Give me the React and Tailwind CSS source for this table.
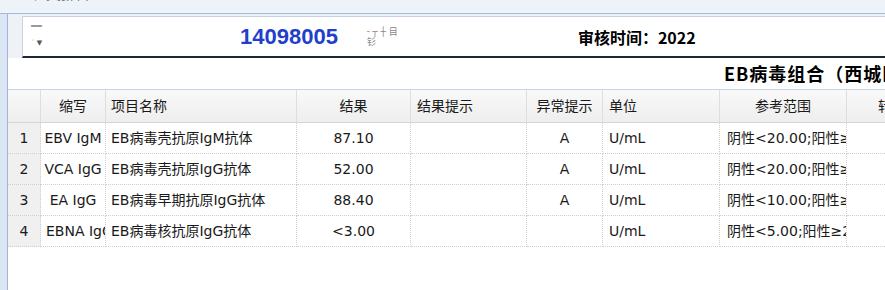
import React from 'react';

const COLS = 'grid grid-cols-[33px_65px_191px_114px_116px_76px_117px_127px_120px]';

const headers = [
  { label: '', cls: 'justify-center' },
  { label: '缩写', cls: 'justify-center' },
  { label: '项目名称', cls: 'justify-start pl-[5px]' },
  { label: '结果', cls: 'justify-center' },
  { label: '结果提示', cls: 'justify-start pl-[6px]' },
  { label: '异常提示', cls: 'justify-center' },
  { label: '单位', cls: 'justify-start pl-[6px]' },
  { label: '参考范围', cls: 'justify-center' },
  { label: '转换结果', cls: 'justify-start pl-[31px]' },
];

const rows = [
  ['1', 'EBV IgM', 'EB病毒壳抗原IgM抗体', '87.10', '', 'A', 'U/mL', '阴性<20.00;阳性≥20.00', ''],
  ['2', 'VCA IgG', 'EB病毒壳抗原IgG抗体', '52.00', '', 'A', 'U/mL', '阴性<20.00;阳性≥20.00', ''],
  ['3', 'EA IgG', 'EB病毒早期抗原IgG抗体', '88.40', '', 'A', 'U/mL', '阴性<10.00;阳性≥10.00', ''],
  ['4', 'EBNA IgG', 'EB病毒核抗原IgG抗体', '<3.00', '', '', 'U/mL', '阴性<5.00;阳性≥20.00', ''],
];

const cellAlign = [
  'justify-center',
  'justify-center',
  'justify-start pl-[5px]',
  'justify-center',
  'justify-start pl-[6px]',
  'justify-center',
  'justify-start pl-[6px]',
  'justify-start pl-[7px]',
  'justify-start pl-[6px]',
];

export default function App() {
  return (
    <div className="w-[885px] h-[290px] overflow-hidden bg-white flex flex-col font-['DejaVu_Sans','Noto_Sans_CJK_SC',sans-serif] text-[#1a1a1a]">
      {/* title strip, cut off at top */}
      <div className="h-[14px] shrink-0 bg-[#eef3fa] border-b border-[#a3badc] overflow-hidden">
        <div className="pl-[33px] mt-[-11px] text-[12px] leading-[14px] text-[#5a6478] whitespace-nowrap">检验报告单</div>
      </div>

      <div className="flex flex-1 min-h-0">
        <div className="w-[8px] shrink-0 bg-[#dbe5f3] border-r border-[#9fb5d8]" />

        <div className="flex-1 min-w-0 flex flex-col">
          {/* patient header */}
          <div className="h-[44px] shrink-0 flex bg-[#eef1f5]">
            <div className="w-[14px] shrink-0" />
            <div className="flex-1 mt-[2px] bg-white border-t border-l border-[#c9d2de] border-b-2 border-b-[#1f2636] flex items-center whitespace-nowrap">
              <div className="w-[217px] shrink-0 flex flex-col gap-[6px] pl-[8px] text-[7px] leading-[7px] text-[#555]">
                <span>▔▔</span>
                <span>˙ ▼</span>
              </div>
              <span className="font-['Liberation_Sans',sans-serif] font-bold text-[22px] text-[#1f3fcc]">14098005</span>
              <span className="ml-[29px] text-[9px] leading-[10px] text-[#888] flex flex-col">
                <span>╴┬ ┼ 目</span>
                <span>钐</span>
              </span>
              <span className="ml-[180px] font-['Noto_Sans_CJK_SC',sans-serif] font-bold text-[16px] text-black">审核时间：2022</span>
            </div>
          </div>

          {/* report title */}
          <div className="h-[31px] shrink-0 flex items-center pl-[716px] whitespace-nowrap">
            <span className="font-['Noto_Sans_CJK_SC',serif] font-bold text-[18px] text-black tracking-[1px]">EB病毒组合（西城区）</span>
          </div>

          {/* result grid */}
          <div className="border-t border-[#c5d3e8] flex-1">
            <div className={`${COLS} h-[33px] bg-gradient-to-b from-[#f9f9f9] to-[#eeeeee] border-b border-[#d6d6d6] text-[14px]`}>
              {headers.map((h, i) => (
                <div key={i} className={`flex items-center overflow-hidden whitespace-nowrap border-r border-[#dedede] ${h.cls}`}>
                  {h.label}
                </div>
              ))}
            </div>
            {rows.map((r, ri) => (
              <div key={ri} className={`${COLS} h-[31px] text-[14px]`}>
                {r.map((v, ci) => (
                  <div
                    key={ci}
                    className={`flex items-center overflow-hidden whitespace-nowrap border-r border-b border-dotted border-[#cfcfcf] ${ci === 0 ? 'bg-[#f0f0f0]' : ''} ${ri === 3 && ci === 1 ? 'justify-start pl-[5px]' : cellAlign[ci]}`}
                  >
                    {v}
                  </div>
                ))}
              </div>
            ))}
          </div>
        </div>
      </div>
    </div>
  );
}
